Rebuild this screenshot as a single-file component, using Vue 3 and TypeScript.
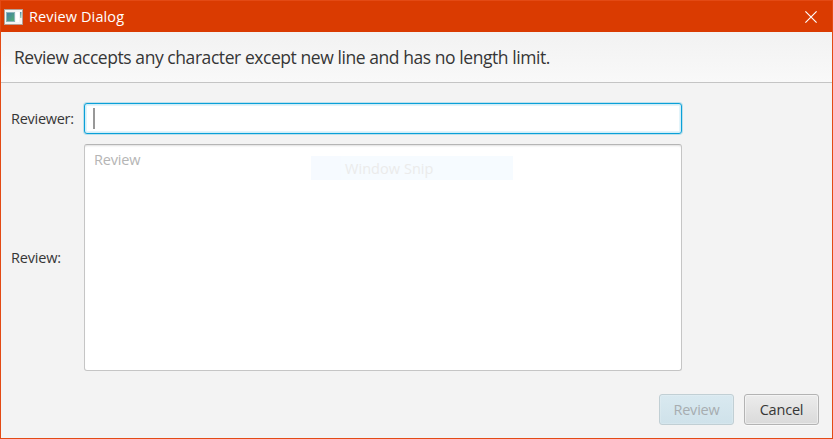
<script setup lang="ts">
import { ref } from 'vue'

const reviewer = ref<string>('')
const snipLabel = 'Window Snip'
</script>

<template>
  <div class="window">
    <header class="titlebar">
      <svg class="app-icon" width="19" height="16" viewBox="0 0 19 16">
        <defs>
          <linearGradient id="pane" x1="0" y1="0" x2="1" y2="1">
            <stop offset="0" stop-color="#4380a6" />
            <stop offset="1" stop-color="#53ad72" />
          </linearGradient>
          <linearGradient id="strip" x1="0" y1="0" x2="0" y2="1">
            <stop offset="0" stop-color="#4f8fa6" />
            <stop offset="1" stop-color="#9fd0b4" />
          </linearGradient>
        </defs>
        <rect x="0" y="0" width="19" height="16" fill="#b5a197" />
        <rect x="1" y="1" width="17" height="14" fill="#f4f4f4" />
        <rect x="2" y="3" width="9" height="10" fill="#8db5bb" />
        <rect x="3" y="4" width="7" height="8" fill="url(#pane)" />
        <rect x="12" y="3" width="3" height="10" fill="#fff" />
        <rect x="16" y="3" width="1.5" height="6" fill="url(#strip)" />
      </svg>
      <span class="title">Review Dialog</span>
      <svg class="close" width="12" height="12" viewBox="0 0 12 12">
        <path d="M0.4 0.4L11.6 11.6M11.6 0.4L0.4 11.6" stroke="#fff" stroke-width="1.15" fill="none" />
      </svg>
    </header>
    <section class="banner">
      <span class="banner-text">Review accepts any character except new line and has no length limit.</span>
    </section>
    <main class="form">
      <span class="label label-reviewer">Reviewer:</span>
      <div class="field"><span class="caret"></span>{{ reviewer }}</div>
      <span class="label label-review">Review:</span>
      <div class="area">
        <span class="prompt">Review</span>
        <div class="snip"><span class="snip-text">{{ snipLabel }}</span></div>
      </div>
    </main>
    <footer class="buttons">
      <div class="btn primary"><span class="btn-review">Review</span></div>
      <div class="btn"><span class="btn-cancel">Cancel</span></div>
    </footer>
  </div>
</template>

<style>
body {
  margin: 0;
  overflow: hidden;
}
</style>

<style scoped>
.window {
  box-sizing: border-box;
  width: 833px;
  height: 439px;
  border: 1px solid #e34a14;
  background: #f3f3f3;
  display: flex;
  flex-direction: column;
  font-family: "Open Sans", "Noto Sans", sans-serif;
  font-size: 14.5px;
  letter-spacing: -0.2px;
  line-height: 20px;
  color: #363636;
  white-space: nowrap;
}
.titlebar {
  height: 31px;
  flex: none;
  background: #da3b01;
  display: flex;
  align-items: center;
  padding: 0 15px 0 3px;
  color: #fff;
}
.app-icon {
  margin-right: 6px;
}
.title {
  flex: 1;
  letter-spacing: 0.12px;
}
.banner {
  height: 50px;
  flex: none;
  border-bottom: 1px solid #c4c4c4;
  background: linear-gradient(#f2f2f2, #f9f9f9);
  display: flex;
  align-items: center;
  padding-left: 13px;
}
.banner-text {
  font-size: 17.5px;
  letter-spacing: -0.435px;
}
.form {
  display: grid;
  grid-template-columns: 63px 598px;
  grid-template-rows: 31px 227px;
  gap: 10px;
  padding: 20px 0 0 10px;
  align-items: center;
}
.label-reviewer {
  letter-spacing: -0.27px;
}
.field,
.area {
  box-sizing: border-box;
  height: 100%;
  background: #fff;
  border-radius: 3px;
}
.field {
  border: 1px solid #0aa0d8;
  box-shadow: 0 0 0 1px rgba(3, 158, 211, 0.22), inset 0 0 0 1px #d2eef8, inset 0 0 0 2px #e3f4fa;
  display: flex;
  align-items: center;
  padding-left: 8px;
}
.caret {
  width: 2px;
  height: 21px;
  background: #989898;
}
.area {
  border: 1px solid #c5c5c5;
  border-top-color: #b5b5b5;
  box-shadow: inset 0 2px 2px -1px #e0e0e0;
  padding: 5px 0 0 9px;
  position: relative;
}
.prompt {
  color: #b5b5b5;
}
.snip {
  position: absolute;
  left: 226px;
  top: 11px;
  width: 202px;
  height: 24px;
  box-sizing: border-box;
  padding: 3px 0 0 34px;
  background: linear-gradient(90deg, #f6faff 30px, #f6fbff 30px);
  color: #ebebeb;
  letter-spacing: 0.05px;
}
.buttons {
  display: flex;
  justify-content: flex-end;
  gap: 10px;
  padding: 23px 13px 0 0;
}
.btn {
  box-sizing: border-box;
  width: 75px;
  height: 31px;
  border: 1px solid #b3b3b3;
  border-radius: 3px;
  background: linear-gradient(#ececec, #dadada);
  box-shadow: inset 0 0 0 1px rgba(255, 255, 255, 0.45), 0 1px 0 #fafafa;
  display: flex;
  align-items: center;
  justify-content: center;
}
.primary {
  border-color: #c1cfd4;
  background: linear-gradient(#d9e9f0, #cfe2ea);
  box-shadow: inset 0 0 0 1px rgba(255, 255, 255, 0.15);
  color: #a7adb0;
}
</style>
